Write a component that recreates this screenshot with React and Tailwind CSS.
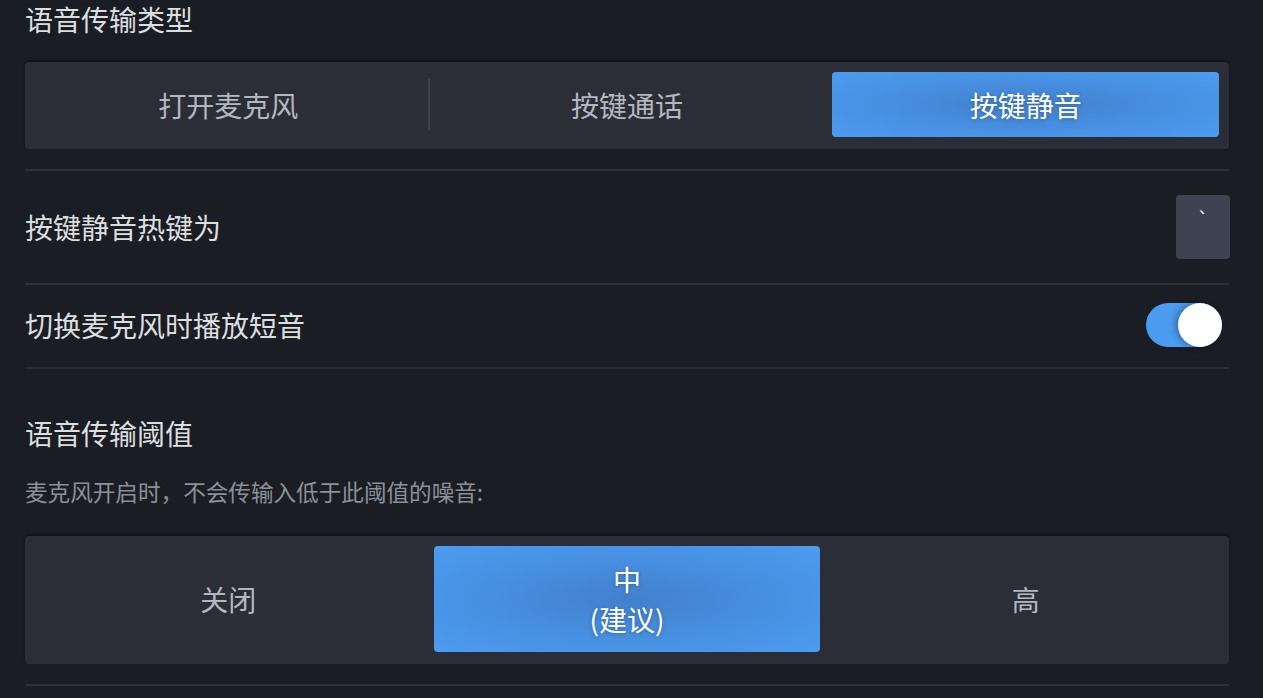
import { useState } from "react";

const font = { fontFamily: '"Noto Sans CJK SC", "Noto Sans", sans-serif' };

const Segmented = ({ options, selected, onSelect, height, divider }) => {
    return (
        <div className="rounded-[4px] bg-[#2b2e37] px-[10px] pt-[10px] pb-[12px] shadow-[0_-2px_3px_rgba(0,0,0,0.45)]">
            <div className="grid grid-cols-3 gap-3">
                {options.map((opt, i) => (
                    <div key={i} className="relative">
                        <button
                            onClick={() => onSelect(i)}
                            className={`w-full flex flex-col items-center justify-center rounded-[4px] text-[28px] leading-[40px] ${
                                selected === i
                                    ? "bg-[radial-gradient(ellipse_at_center,#4280cd_0%,#4890e2_55%,#4c9cf1_100%)] text-white [text-shadow:0_1px_4px_rgba(0,0,0,0.25)]"
                                    : "text-[#b4b8be]"
                            } ${height}`}
                        >
                            {opt.map((line, j) => (
                                <span key={j}>{line}</span>
                            ))}
                        </button>
                        {/* divider between the two unselected segments */}
                        {divider && i === 0 && selected === 2 && (
                            <div className="absolute top-[7px] -right-[8px] h-[51px] w-[2px] bg-[#3c414b]" />
                        )}
                    </div>
                ))}
            </div>
        </div>
    );
};

export default function App() {
    const [voiceType, setVoiceType] = useState(2);
    const [threshold, setThreshold] = useState(1);
    const [beep, setBeep] = useState(true);

    return (
        <div className="min-h-[698px] w-full bg-[#1a1d24] overflow-hidden" style={font}>
            <div className="pl-[25px] pr-[34px]">
                {/* voice transmission type */}
                <div className="h-[38px] flex items-center text-[28px] text-[#dcdedf]">语音传输类型</div>
                <div className="mt-6">
                    <Segmented
                        options={[["打开麦克风"], ["按键通话"], ["按键静音"]]}
                        selected={voiceType}
                        onSelect={setVoiceType}
                        height="h-[65px]"
                        divider
                    />
                </div>
                <div className="mt-5 h-[2px] bg-[#2c3039]" />

                {/* hotkey */}
                <div className="flex items-center justify-between py-6">
                    <span className="text-[28px] text-[#dcdedf]">按键静音热键为</span>
                    <div className="mr-[-1px] w-[54px] h-[64px] rounded-[4px] bg-[#3d4350] flex justify-center pt-[14px] text-[20px] leading-none text-white" style={{ fontFamily: '"DejaVu Sans", sans-serif' }}>
                        `
                    </div>
                </div>
                <div className="h-[2px] bg-[#2c3039]" />

                {/* beep toggle */}
                <div className="flex items-center justify-between pt-[18px] pb-5">
                    <span className="text-[28px] text-[#dcdedf]">切换麦克风时播放短音</span>
                    <button
                        onClick={() => setBeep(!beep)}
                        className={`mr-[7px] w-[76px] h-[44px] rounded-full flex items-center ${
                            beep ? "bg-[#4b9cf1] justify-end" : "bg-[#3d4350] justify-start"
                        }`}
                    >
                        <span className="w-[44px] h-[44px] rounded-full bg-white shadow-[-3px_0_6px_rgba(0,0,0,0.3)]" />
                    </button>
                </div>
                <div className="h-[2px] bg-[#2c3039]" />

                {/* threshold */}
                <div className="mt-[44px] h-[39px] flex items-center text-[28px] text-[#dcdedf]">语音传输阈值</div>
                <div className="mt-6 h-[31px] flex items-center text-[22.6px] text-[#8b9199]">
                    麦克风开启时，不会传输入低于此阈值的噪音:
                </div>
                <div className="mt-[29px]">
                    <Segmented
                        options={[["关闭"], ["中", "(建议)"], ["高"]]}
                        selected={threshold}
                        onSelect={setThreshold}
                        height="h-[106px]"
                    />
                </div>
                <div className="mt-5 h-[2px] bg-[#2c3039]" />
            </div>
        </div>
    );
}
